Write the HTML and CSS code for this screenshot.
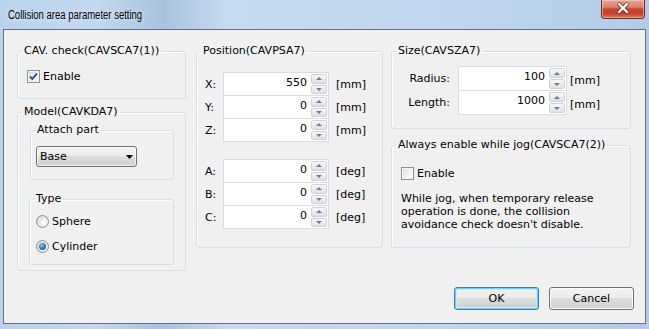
FILE: index.html
```html
<!DOCTYPE html>
<html lang="en">
<head>
    <meta charset="UTF-8">
    <title>Collision area parameter setting</title>
    <link rel="stylesheet" href="styles.css">
</head>
<body>
    <div class="window">
        <div class="titlebar">
            <span class="title">Collision area parameter setting</span>
            <div class="close-btn">
                <svg width="44" height="19" viewBox="0 0 44 19">
                    <path d="M18 5 L26 13 M26 5 L18 13" stroke="#5a1f16" stroke-width="4" stroke-linecap="round" fill="none" opacity="0.7"/>
                    <path d="M18 5 L26 13 M26 5 L18 13" stroke="#ffffff" stroke-width="2.2" stroke-linecap="square" fill="none"/>
                </svg>
            </div>
        </div>

        <div class="client">
            <div class="columns">
                <!-- columna izquierda -->
                <div class="col col-left">
                    <fieldset class="group">
                        <legend>CAV. check(CAVSCA7(1))</legend>
                        <div class="group-body body-check">
                            <div class="check-row">
                                <span class="checkbox checked">
                                    <svg width="11" height="11" viewBox="0 0 11 11"><path d="M2 5.5 L4.3 8 L9 2.5" stroke="#2b3f6b" stroke-width="1.8" fill="none"/></svg>
                                </span>
                                Enable
                            </div>
                        </div>
                    </fieldset>

                    <fieldset class="group group-model">
                        <legend>Model(CAVKDA7)</legend>
                        <div class="group-body body-model">
                            <fieldset class="group">
                                <legend>Attach part</legend>
                                <div class="group-body body-attach">
                                    <div class="combo">
                                        <span>Base</span>
                                        <svg width="7" height="4" viewBox="0 0 7 4"><path d="M0 0 H7 L3.5 4 Z" fill="#000"/></svg>
                                    </div>
                                </div>
                            </fieldset>
                            <fieldset class="group group-type">
                                <legend>Type</legend>
                                <div class="group-body body-type">
                                    <div class="radio-row"><span class="radio"></span>Sphere</div>
                                    <div class="radio-row"><span class="radio checked"></span>Cylinder</div>
                                </div>
                            </fieldset>
                        </div>
                    </fieldset>
                </div>

                <!-- posicion -->
                <fieldset class="group group-position">
                    <legend>Position(CAVPSA7)</legend>
                    <div class="group-body body-position">
                        <div class="pos-row">
                            <span class="pos-label">X:</span>
                            <div class="field"><span class="value">550</span><div class="spin"><span class="up"></span><span class="down"></span></div></div>
                            <span class="unit">[mm]</span>
                        </div>
                        <div class="pos-row">
                            <span class="pos-label">Y:</span>
                            <div class="field"><span class="value">0</span><div class="spin"><span class="up"></span><span class="down"></span></div></div>
                            <span class="unit">[mm]</span>
                        </div>
                        <div class="pos-row">
                            <span class="pos-label">Z:</span>
                            <div class="field"><span class="value">0</span><div class="spin"><span class="up"></span><span class="down"></span></div></div>
                            <span class="unit">[mm]</span>
                        </div>
                        <div class="pos-row first-angle">
                            <span class="pos-label">A:</span>
                            <div class="field"><span class="value">0</span><div class="spin"><span class="up"></span><span class="down"></span></div></div>
                            <span class="unit">[deg]</span>
                        </div>
                        <div class="pos-row">
                            <span class="pos-label">B:</span>
                            <div class="field"><span class="value">0</span><div class="spin"><span class="up"></span><span class="down"></span></div></div>
                            <span class="unit">[deg]</span>
                        </div>
                        <div class="pos-row">
                            <span class="pos-label">C:</span>
                            <div class="field"><span class="value">0</span><div class="spin"><span class="up"></span><span class="down"></span></div></div>
                            <span class="unit">[deg]</span>
                        </div>
                    </div>
                </fieldset>

                <!-- columna derecha -->
                <div class="col col-right">
                    <fieldset class="group">
                        <legend>Size(CAVSZA7)</legend>
                        <div class="group-body body-size">
                            <div class="size-row">
                                <span class="size-label">Radius:</span>
                                <div class="field"><span class="value">100</span><div class="spin"><span class="up"></span><span class="down"></span></div></div>
                                <span class="unit">[mm]</span>
                            </div>
                            <div class="size-row">
                                <span class="size-label">Length:</span>
                                <div class="field"><span class="value">1000</span><div class="spin"><span class="up"></span><span class="down"></span></div></div>
                                <span class="unit">[mm]</span>
                            </div>
                        </div>
                    </fieldset>

                    <fieldset class="group group-jog">
                        <legend>Always enable while jog(CAVSCA7(2))</legend>
                        <div class="group-body body-jog">
                            <div class="check-row">
                                <span class="checkbox"></span>
                                Enable
                            </div>
                            <p class="note">While jog, when temporary release operation is done, the collision avoidance check doesn't disable.</p>
                        </div>
                    </fieldset>
                </div>
            </div>

            <div class="buttons">
                <button class="btn btn-default">OK</button>
                <button class="btn">Cancel</button>
            </div>
        </div>
    </div>
</body>
</html>
```

FILE: styles.css
```css
* {
    box-sizing: border-box;
}

body {
    margin: 0;
    width: 649px;
    height: 329px;
    overflow: hidden;
    font-family: "DejaVu Sans", sans-serif;
    font-size: 11px;
    color: #000;
}

.window {
    width: 649px;
    height: 329px;
    padding: 0 3px 5px 3px;
    display: flex;
    flex-direction: column;
    background: linear-gradient(90deg, #bad2ec 0%, #c3d8ef 15%, #a9c2de 25%, #c6daf0 35%, #c0d6ee 70%, #b3cbe6 100%);
}

.titlebar {
    height: 29px;
    display: flex;
    justify-content: space-between;
    align-items: flex-start;
}

.title {
    font-family: "Liberation Sans", sans-serif;
    font-size: 12.5px;
    line-height: 14px;
    margin: 8px 0 0 5px;
    transform: scaleX(0.76);
    transform-origin: left center;
    white-space: nowrap;
    text-shadow: 0 0 6px rgba(255, 255, 255, 0.8);
}

.close-btn {
    width: 44px;
    height: 19px;
    margin-right: 1px;
    border: 1px solid #6b2b21;
    border-top: none;
    border-radius: 0 0 4px 4px;
    background: linear-gradient(180deg, #e7a595 0%, #d9816d 40%, #c54630 50%, #c4412b 75%, #d9775f 100%);
    box-shadow: inset 0 0 0 1px rgba(255, 220, 210, 0.5);
}

.close-btn svg {
    display: block;
    margin: -1px 0 0 -1px;
}

.client {
    flex: 1;
    background-color: #f0f0f0;
    border: 1px solid #60728a;
    padding: 14px 11px 0 13px;
    display: flex;
    flex-direction: column;
}

.columns {
    display: flex;
    align-items: flex-start;
}

.col {
    display: flex;
    flex-direction: column;
}

.col-left {
    width: 169px;
}

.col-right {
    width: 240px;
    margin-left: 8px;
}

/* group boxes */
.group {
    margin: 0;
    padding: 0;
    border: 1px solid #d5dfe5;
    border-radius: 3px;
    min-width: 0;
    box-shadow: inset 1px 1px 0 #fff;
}

.group > legend {
    padding: 0 2px;
    margin-left: 4px;
    line-height: 14px;
}

.body-check {
    padding: 12px 0 15px 9px;
}

.group-model {
    margin-top: 6px;
}

.body-model {
    padding: 4px 11px 5px 12px;
}

.body-attach {
    padding: 9px 0 12px 5px;
}

.group-type {
    margin: 12px 0 0 -1px;
}

.body-type {
    padding: 9px 0 11px 6px;
}

.group-position {
    width: 187px;
    margin-left: 10px;
}

.body-position {
    padding: 14px 0 18px 8px;
}

.body-size {
    padding: 8px 0 13px 8px;
}

.group-jog {
    margin-top: 9px;
}

.body-jog {
    padding: 15px 0 16px 9px;
}

/* checkbox */
.check-row {
    display: flex;
    align-items: center;
    height: 13px;
    gap: 3px;
}

.checkbox {
    width: 13px;
    height: 13px;
    border: 1px solid #8e8f8f;
    background: linear-gradient(135deg, #dcdcdc 0%, #f4f4f4 60%, #ffffff 100%);
    box-shadow: inset 0 0 0 1px #f6f6f6;
}

.checkbox.checked {
    background: linear-gradient(135deg, #c9d3e4 0%, #e8edf5 60%, #ffffff 100%);
}

.checkbox svg {
    display: block;
}

/* radio */
.radio-row {
    display: flex;
    align-items: center;
    height: 13px;
    gap: 3px;
}

.radio-row + .radio-row {
    margin-top: 12px;
}

.radio {
    width: 13px;
    height: 13px;
    border-radius: 50%;
    border: 1px solid #8e8f8f;
    background: radial-gradient(circle at 60% 60%, #ffffff 0%, #e8e8e8 50%, #cfcfcf 100%);
    display: flex;
    align-items: center;
    justify-content: center;
}

.radio.checked::after {
    content: "";
    width: 7px;
    height: 7px;
    border-radius: 50%;
    background: radial-gradient(circle at 40% 35%, #8fd0f6 0%, #2a7fc0 45%, #0f4a87 100%);
}

/* combo */
.combo {
    width: 101px;
    height: 21px;
    border: 1px solid #707070;
    border-radius: 3px;
    background: linear-gradient(180deg, #f2f2f2 0%, #ebebeb 50%, #dddddd 50%, #cfcfcf 100%);
    box-shadow: inset 0 0 0 1px rgba(255, 255, 255, 0.7);
    display: flex;
    align-items: center;
    justify-content: space-between;
    padding: 0 3px;
}

/* edit fields with spinner */
.pos-row, .size-row {
    display: flex;
    align-items: center;
}

.pos-row {
    height: 24px;
}

.pos-row + .pos-row {
    margin-top: -1px;
}

.pos-row.first-angle {
    margin-top: 17px;
}

.pos-label {
    width: 18px;
}

.pos-row .field {
    width: 106px;
    height: 24px;
}

.pos-row .unit {
    margin-left: 7px;
}

.size-row {
    height: 25px;
}

.size-row + .size-row {
    margin-top: -1px;
}

.size-label {
    width: 50px;
    text-align: right;
}

.size-row .field {
    width: 109px;
    height: 25px;
    margin-left: 8px;
}

.size-row .unit {
    margin-left: 3px;
    margin-top: 4px;
}

.field {
    border: 1px solid #d9dde3;
    background-color: #fff;
    display: flex;
    align-items: stretch;
}

.value {
    flex: 1;
    text-align: right;
    padding-right: 4px;
    line-height: 20px;
}

.spin {
    width: 16px;
    margin: 1px 1px 1px 0;
    display: flex;
    flex-direction: column;
    gap: 1px;
}

.spin span {
    flex: 1;
    border: 1px solid #cdd2da;
    border-radius: 2px;
    background: linear-gradient(180deg, #f7f7f7 0%, #ececec 50%, #e0e0e0 100%);
    display: flex;
    align-items: center;
    justify-content: center;
}

.spin .up::after {
    content: "";
    border-left: 3px solid transparent;
    border-right: 3px solid transparent;
    border-bottom: 3px solid #6a7c98;
}

.spin .down::after {
    content: "";
    border-left: 3px solid transparent;
    border-right: 3px solid transparent;
    border-top: 3px solid #6a7c98;
}

.note {
    margin: 12px 0 0 0;
    line-height: 13px;
    width: 220px;
}

/* buttons */
.buttons {
    display: flex;
    justify-content: flex-end;
    gap: 10px;
    margin-top: 16px;
}

.btn {
    width: 85px;
    height: 23px;
    font-family: "DejaVu Sans", sans-serif;
    font-size: 11px;
    color: #000;
    border: 1px solid #707070;
    border-radius: 3px;
    background: linear-gradient(180deg, #f2f2f2 0%, #ebebeb 50%, #dddddd 50%, #cfcfcf 100%);
    box-shadow: inset 0 0 0 1px #fcfcfc;
    padding: 0;
}

.btn-default {
    border-color: #3c7fb1;
    box-shadow: inset 0 0 0 1px #6ccff5, inset 0 0 0 2px #c6ecfb;
}
```
